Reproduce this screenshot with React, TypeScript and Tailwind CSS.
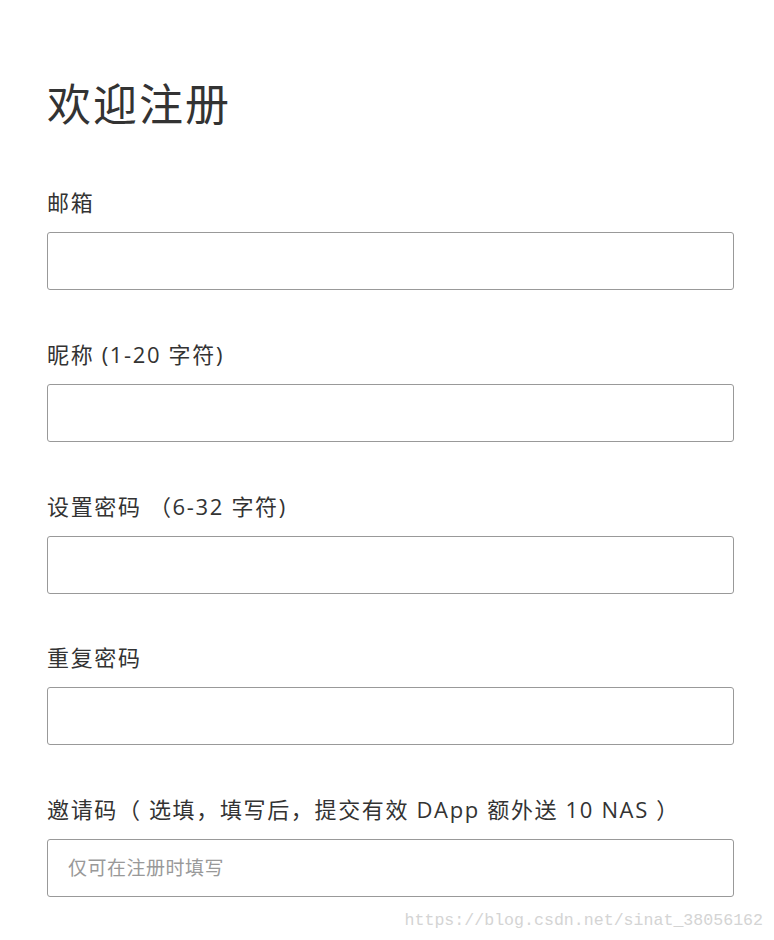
import React from "react";

const font = "font-['Open_Sans','Noto_Sans_CJK_SC',sans-serif]";

function Field({ label, placeholder }: { label: string; placeholder?: string }) {
  return (
    <div className="flex flex-col mt-[48.75px] first:mt-0">
      <label className="h-[30px] leading-[30px] text-[22px] tracking-[1.65px] text-[#333]">{label}</label>
      <input
        className={`mt-[15px] h-[58px] w-[687px] rounded-[3px] border border-[#999] bg-white px-[20px] text-[19px] tracking-[0.5px] text-[#333] outline-none placeholder:text-[#999] ${font}`}
        placeholder={placeholder}
      />
    </div>
  );
}

export default function App() {
  return (
    <div className={`min-h-[940px] w-[774px] bg-white pl-[47px] pt-[74px] ${font}`}>
      <h1 className="h-[60px] leading-[60px] text-[44px] tracking-[2px] text-[#333]">欢迎注册</h1>
      <div className="mt-[53px] flex flex-col">
        <Field label="邮箱" />
        <Field label="昵称 (1-20 字符)" />
        <Field label="设置密码 （6-32 字符)" />
        <Field label="重复密码" />
        <Field label="邀请码（ 选填，填写后，提交有效 DApp 额外送 10 NAS ）" placeholder="仅可在注册时填写" />
      </div>
      <div className="mt-[12px] pr-[11px] text-right font-['Liberation_Mono',monospace] text-[16.6px] text-[#d4d4d4]">
        https://blog.csdn.net/sinat_38056162
      </div>
    </div>
  );
}
